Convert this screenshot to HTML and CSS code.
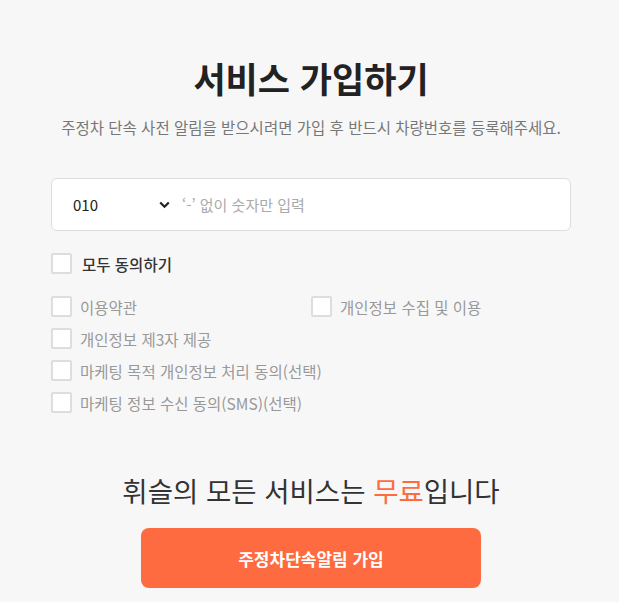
FILE: index.html
```html
<!DOCTYPE html>
<html lang="ko">
<head>
<meta charset="utf-8">
<link rel="stylesheet" href="styles.css">
</head>
<body>
<main class="page">
  <h1 class="title">서비스 가입하기</h1>
  <p class="subtitle">주정차 단속 사전 알림을 받으시려면 가입 후 반드시 차량번호를 등록해주세요.</p>

  <div class="phone">
    <div class="prefix">
      <span>010</span>
      <svg class="chevron" width="11" height="8" viewBox="0 0 11 8"><path d="M1.2 1.5 L5.5 5.8 L9.8 1.5" fill="none" stroke="#222" stroke-width="2.2"/></svg>
    </div>
    <span class="placeholder">‘-’ 없이 숫자만 입력</span>
  </div>

  <label class="check all"><span class="box"></span><span>모두 동의하기</span></label>

  <div class="terms">
    <label class="check"><span class="box"></span><span>이용약관</span></label>
    <label class="check"><span class="box"></span><span>개인정보 수집 및 이용</span></label>
    <label class="check full"><span class="box"></span><span>개인정보 제3자 제공</span></label>
    <label class="check full"><span class="box"></span><span>마케팅 목적 개인정보 처리 동의(선택)</span></label>
    <label class="check full"><span class="box"></span><span>마케팅 정보 수신 동의(SMS)(선택)</span></label>
  </div>

  <p class="free">휘슬의 모든 서비스는 <em>무료</em>입니다</p>

  <button class="submit">주정차단속알림 가입</button>
</main>
</body>
</html>
```

FILE: styles.css
```css
html, body {
  margin: 0;
  background: #f7f7f7;
}
body {
  font-family: "Noto Sans CJK KR", "Noto Sans", sans-serif;
  color: #222;
}
.page {
  width: 520px;
  margin-left: 51px;
  padding-top: 53px;
  display: flex;
  flex-direction: column;
}
.title {
  margin: 0;
  text-align: center;
  font-size: 35px;
  line-height: 50px;
  font-weight: 700;
  color: #222;
}
.subtitle {
  margin: 12px 0 0;
  text-align: center;
  font-size: 15.5px;
  line-height: 24px;
  color: #777;
}
.phone {
  margin-top: 39px;
  height: 53px;
  box-sizing: border-box;
  background: #fff;
  border: 1px solid #ddd;
  border-radius: 6px;
  display: flex;
  align-items: center;
  padding-left: 21px;
}
.prefix {
  width: 109px;
  display: flex;
  align-items: center;
  justify-content: space-between;
  font-size: 15px;
  color: #222;
}
.chevron {
  margin-right: 12px;
}
.placeholder {
  font-size: 15px;
  color: #aaa;
}
.check {
  display: flex;
  align-items: center;
  gap: 8px;
  height: 21px;
  font-size: 15.5px;
  color: #999;
}
.box {
  width: 21px;
  height: 21px;
  box-sizing: border-box;
  background: #fff;
  border: 2px solid #ddd;
  border-radius: 2px;
  flex: none;
}
.check.all {
  margin-top: 22px;
  color: #333;
  font-weight: 500;
  gap: 10px;
}
.terms {
  margin-top: 22px;
  display: grid;
  grid-template-columns: 1fr 1fr;
  row-gap: 11px;
}
.terms .full {
  grid-column: 1 / -1;
}
.free {
  margin: 57px 0 0;
  text-align: center;
  font-size: 27.5px;
  line-height: 40px;
  color: #333;
}
.free em {
  font-style: normal;
  color: #ff6b40;
}
.submit {
  margin: 18px auto 0;
  width: 340px;
  height: 60px;
  border: 0;
  border-radius: 8px;
  background: #ff6b40;
  color: #fff;
  font-family: inherit;
  font-size: 17px;
  font-weight: 700;
}
```
